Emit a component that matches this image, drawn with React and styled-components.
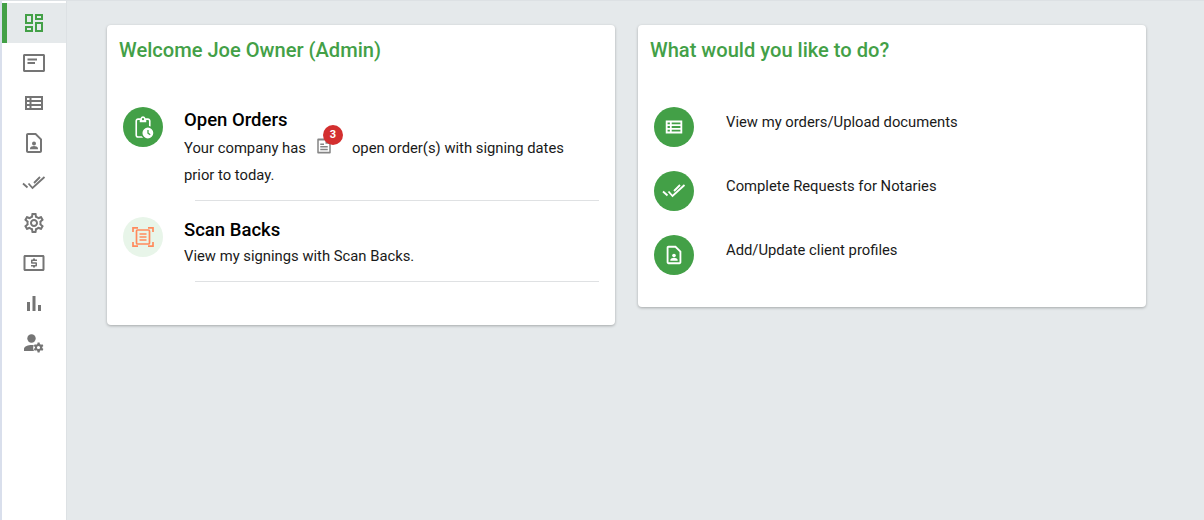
import React from "react";
import styled, { createGlobalStyle } from "styled-components";

const Global = createGlobalStyle`
  html, body { margin: 0; padding: 0; height: 100%; background: #e5e9eb; }
  body { font-family: Roboto, "Liberation Sans", sans-serif; color: #1a1a1a; }
  #root { height: 520px; overflow: hidden; }
`;

const Page = styled.div`
  display: flex;
  height: 520px;
  border-top: 1px solid #dde1e4;
  box-sizing: border-box;
`;
const Sidebar = styled.nav`
  width: 67px;
  flex: none;
  box-sizing: border-box;
  background: #fff;
  border-left: 2px solid #d9dfec;
  border-right: 1px solid #dde1e4;
  padding-top: 2px;
  display: flex;
  flex-direction: column;
`;
const NavItem = styled.div`
  position: relative;
  height: 40px;
  display: flex;
  align-items: center;
  justify-content: center;
  background: ${(p) => (p.$active ? "#e5e9eb" : "transparent")};
  color: ${(p) => (p.$active ? "#43a047" : "#757575")};
  ${(p) =>
    p.$active &&
    `&::before {
      content: "";
      position: absolute;
      left: 0;
      top: 0;
      bottom: 0;
      width: 5px;
      background: #43a047;
    }`}
`;
const Main = styled.main`
  flex: 1;
  display: grid;
  grid-template-columns: 508px 508px;
  column-gap: 23px;
  align-items: start;
  padding: 24px 0 0 40px;
`;
const Card = styled.section`
  background: #fff;
  border-radius: 4px;
  box-shadow: 0 1px 3px rgba(0, 0, 0, 0.28);
  padding: 12px 16px 0 12px;
  height: ${(p) => p.$h}px;
  box-sizing: border-box;
`;
const Title = styled.h2`
  margin: 0;
  font-size: 20.1px;
  line-height: 26px;
  font-weight: 500;
  color: #43a047;
`;
const RowList = styled.div`
  margin-top: 28px;
  display: flex;
  flex-direction: column;
`;
const Row = styled.div`
  display: flex;
  align-items: flex-start;
  padding: 16px 0 11px 4px;
`;
const Circle = styled.div`
  width: 40px;
  height: 40px;
  flex: none;
  border-radius: 50%;
  display: flex;
  align-items: center;
  justify-content: center;
  background: ${(p) => (p.$soft ? "#e8f5e9" : "#43a047")};
  color: ${(p) => (p.$soft ? "#ff8a5c" : "#fff")};
`;
const RowBody = styled.div`
  margin-left: 21px;
  flex: 1;
  padding-right: 30px;
`;
const RowTitle = styled.div`
  margin-top: 1px;
  font-size: 18.5px;
  line-height: 24px;
  font-weight: 500;
  color: #000;
`;
const RowText = styled.div`
  font-size: 14.8px;
  line-height: 27px;
  margin-top: ${(p) => p.$gap}px;
`;
const Divider = styled.div`
  height: 1px;
  background: #dfe1e3;
  margin-left: 76px;
`;
const OrderIcon = styled.span`
  position: relative;
  display: inline-block;
  width: 20px;
  height: 18px;
  margin: 0 17px 0 9px;
  vertical-align: -2px;
  color: #858585;
`;
const Badge = styled.span`
  position: absolute;
  top: -12px;
  left: 8px;
  width: 20px;
  height: 20px;
  border-radius: 50%;
  background: #d32f2f;
  color: #fff;
  font-size: 11px;
  font-weight: 700;
  line-height: 20px;
  text-align: center;
`;
const ActionList = styled.div`
  margin-top: 44px;
  display: flex;
  flex-direction: column;
  gap: 24px;
`;
const ActionRow = styled.div`
  display: flex;
  align-items: flex-start;
  padding-left: 4px;
`;
const ActionText = styled.div`
  margin: 5px 0 0 32px;
  font-size: 14.8px;
  line-height: 20px;
`;

const Svg = ({ size = 24, children, fill = "currentColor" }) => (
  <svg width={size} height={size} viewBox="0 0 24 24" fill={fill} style={{ display: "block" }}>
    {children}
  </svg>
);

const DashboardIcon = (p) => (
  <Svg {...p}>
    <path d="M19 5v2h-4V5h4M9 5v6H5V5h4m10 8v6h-4v-6h4M9 17v2H5v-2h4M21 3h-8v6h8V3zM11 3H3v10h8V3zm10 8h-8v10h8V11zm-10 4H3v6h8v-6z" />
  </Svg>
);
const CardIcon = (p) => (
  <Svg {...p}>
    <path d="M2.500 3h19c.83 0 1.500.67 1.500 1.500v15c0 .83-.67 1.500-1.500 1.500h-19C1.670 21 1 20.330 1 19.500v-15C1 3.670 1.670 3 2.500 3zm.5 2v14h18V5H3zm2.500 2.500H15v2H5.500v-2zm0 3.500H13v2H5.500v-2z" />
  </Svg>
);
const ListIcon = (p) => (
  <Svg {...p}>
    <path d="M3 5v14h18V5H3zm2 2h2.500v2H5V7zm4.500 0H19v2H9.500V7zM5 11h2.500v2H5v-2zm4.500 0H19v2H9.500v-2zM5 15h2.500v2H5v-2zm4.500 0H19v2H9.500v-2z" />
  </Svg>
);
const DocPersonIcon = (p) => (
  <Svg {...p}>
    <path d="M14 2H6c-1.100 0-2 .9-2 2v16c0 1.100.9 2 2 2h12c1.100 0 2-.9 2-2V8l-6-6zm4 18H6V4h7.200L18 8.800V20z" />
    <circle cx="12" cy="12.500" r="2" />
    <path d="M8 18.200v-1c0-1.400 2.700-2.200 4-2.200s4 .8 4 2.200v1H8z" />
  </Svg>
);
const DoneAllIcon = (p) => (
  <Svg {...p} fill="none">
    <path
      d="M1 12.500l4.500 4M6.500 12.500l4 4.500L22.500 6M12 12l6-6"
      stroke="currentColor"
      strokeWidth="1.800"
    />
  </Svg>
);
const GearIcon = (p) => (
  <Svg {...p}>
    <path d="M19.430 12.980c.04-.32.07-.64.07-.98 0-.34-.03-.66-.07-.98l2.110-1.650c.19-.15.24-.42.12-.64l-2-3.460c-.09-.16-.26-.25-.44-.25-.06 0-.12.01-.17.03l-2.490 1c-.52-.4-1.080-.73-1.690-.98l-.38-2.650C14.460 2.180 14.250 2 14 2h-4c-.25 0-.46.18-.49.42l-.38 2.650c-.61.25-1.170.59-1.690.98l-2.490-1c-.06-.02-.12-.03-.18-.03-.17 0-.34.09-.43.25l-2 3.460c-.13.22-.07.49.12.64l2.110 1.650c-.04.32-.07.65-.07.98 0 .33.03.66.07.98l-2.110 1.650c-.19.15-.24.42-.12.64l2 3.460c.09.16.26.25.44.25.06 0 .12-.01.17-.03l2.490-1c.52.4 1.080.73 1.690.98l.38 2.650c.03.24.24.42.49.42h4c.25 0 .46-.18.49-.42l.38-2.650c.61-.25 1.170-.59 1.690-.98l2.490 1c.06.02.12.03.18.03.17 0 .34-.09.43-.25l2-3.460c.12-.22.07-.49-.12-.64l-2.110-1.650zm-1.980-1.710c.04.31.05.52.05.73 0 .21-.02.43-.05.73l-.14 1.130.89.7 1.080.84-.7 1.210-1.270-.51-1.040-.42-.9.68c-.43.32-.84.56-1.250.73l-1.060.43-.16 1.130-.2 1.350h-1.400l-.19-1.350-.16-1.130-1.060-.43c-.43-.18-.83-.41-1.230-.71l-.91-.7-1.060.43-1.270.51-.7-1.210 1.080-.84.89-.7-.14-1.130c-.03-.31-.05-.54-.05-.74s.02-.43.05-.73l.14-1.130-.89-.7-1.080-.84.7-1.210 1.270.51 1.040.42.9-.68c.43-.32.84-.56 1.250-.73l1.060-.43.16-1.130.2-1.350h1.390l.19 1.350.16 1.130 1.060.43c.43.18.83.41 1.230.71l.91.7 1.060-.43 1.270-.51.7 1.210-1.070.85-.89.7.14 1.130zM12 8c-2.210 0-4 1.790-4 4s1.790 4 4 4 4-1.790 4-4-1.790-4-4-4zm0 6c-1.100 0-2-.9-2-2s.9-2 2-2 2 .9 2 2-.9 2-2 2z" />
  </Svg>
);
const DollarIcon = (p) => (
  <Svg {...p}>
    <path d="M3 4h18c.83 0 1.500.67 1.500 1.500v13c0 .83-.67 1.500-1.500 1.500H3c-.83 0-1.500-.67-1.500-1.500v-13C1.500 4.670 2.170 4 3 4zm.5 2v12h17V6h-17z" />
    <path d="M9 14h4.500v-1.200H10c-.55 0-1-.45-1-1V9.500c0-.55.45-1 1-1h1V7.500h2v1h2V10h-4.500v1.200H14c.55 0 1 .45 1 1v2.300c0 .55-.45 1-1 1h-1v1h-2v-1H9V14z" />
  </Svg>
);
const BarsIcon = (p) => (
  <Svg {...p}>
    <path d="M5 11h3v9H5zM10.500 5h3v15h-3zM16 14h3v6h-3z" />
  </Svg>
);
const PersonGearIcon = (p) => (
  <Svg {...p}>
    <circle cx="9.500" cy="7.500" r="4.200" />
    <path d="M2 20v-2c0-2.600 4.500-4 7.500-4 .8 0 1.500.1 2.300.2-.5 1.100-.8 2.200-.6 3.400.1.900.4 1.700.8 2.400H2z" />
    <path d="M20.300 16.500c0-.2 0-.4-.1-.6l1.200-1-1-1.700-1.500.5c-.3-.3-.6-.4-1-.6l-.3-1.600h-2l-.3 1.600c-.4.2-.7.3-1 .6l-1.500-.5-1 1.700 1.200 1a3 3 0 0 0 0 1.200l-1.200 1 1 1.700 1.500-.5c.3.300.6.400 1 .6l.3 1.600h2l.3-1.600c.4-.2.700-.3 1-.6l1.500.5 1-1.700-1.200-1c.1-.2.100-.4.100-.6zm-3.800 1.600a1.600 1.600 0 1 1 0-3.200 1.600 1.600 0 0 1 0 3.200z" />
  </Svg>
);
const ClipboardClockIcon = (p) => (
  <Svg {...p}>
    <path d="M16.500 4H14.300C13.900 2.800 13 2 12 2s-1.900.8-2.300 2H7.500C6.100 4 5 5.100 5 6.500v13C5 20.900 6.100 22 7.500 22h4.700a7 7 0 0 1-1.400-1.500H7.500a1 1 0 0 1-1-1v-13c0-.55.45-1 1-1H9v2h6v-2h1.500c.55 0 1 .45 1 1v4.600c.5.100 1 .2 1.500.4V6.500C19 5.100 17.900 4 16.500 4zM12 5.800a1 1 0 1 1 0-2 1 1 0 0 1 0 2z" />
    <path d="M16.500 12.500a5 5 0 1 0 0 10 5 5 0 0 0 0-10zm1.800 7.200L16 17.900v-3.100h1.200v2.500l1.800 1.500-.7.900z" />
  </Svg>
);
const ScanIcon = (p) => (
  <Svg {...p} fill="none">
    <g stroke="currentColor" strokeWidth="1.700">
      <path d="M2 7V2.800h5M22 7V2.800h-5M2 17v4.200h5M22 17v4.200h-5" />
      <rect x="5.500" y="5" width="13" height="14" rx="1" />
      <path d="M8.500 9h7M8.500 12h7M8.500 15h7" />
    </g>
  </Svg>
);
const NoteIcon = (p) => (
  <Svg {...p}>
    <path d="M4.500 2H15l6 6v12.500c0 .83-.67 1.500-1.500 1.500h-15C3.670 22 3 21.330 3 20.500v-17C3 2.670 3.670 2 4.500 2zM5 4.500v15h14V9h-5V4.500H5z" />
    <path d="M7 8.500h5v2H7zM7 12h10v2H7zM7 15.500h10v2H7z" />
  </Svg>
);

const navIcons = [
  CardIcon,
  ListIcon,
  DocPersonIcon,
  DoneAllIcon,
  GearIcon,
  DollarIcon,
  BarsIcon,
  PersonGearIcon,
];
const actions = [
  [ListIcon, "View my orders/Upload documents", 22],
  [DoneAllIcon, "Complete Requests for Notaries", 24],
  [DocPersonIcon, "Add/Update client profiles", 22],
];

export default function App() {
  return (
    <Page>
      <Global />
      <Sidebar>
        <NavItem $active>
          <DashboardIcon />
        </NavItem>
        {navIcons.map((Icon, i) => (
          <NavItem key={i}>
            <Icon />
          </NavItem>
        ))}
      </Sidebar>
      <Main>
        <Card $h={300}>
          <Title>Welcome Joe Owner (Admin)</Title>
          <RowList>
            <Row>
              <Circle>
                <ClipboardClockIcon size={26} />
              </Circle>
              <RowBody>
                <RowTitle>Open Orders</RowTitle>
                <RowText $gap={3}>
                  Your company has
                  <OrderIcon>
                    <NoteIcon size={18} />
                    <Badge>3</Badge>
                  </OrderIcon>
                  open order(s) with signing dates prior to today.
                </RowText>
              </RowBody>
            </Row>
            <Divider />
            <Row>
              <Circle $soft>
                <ScanIcon size={24} />
              </Circle>
              <RowBody>
                <RowTitle>Scan Backs</RowTitle>
                <RowText $gap={1}>View my signings with Scan Backs.</RowText>
              </RowBody>
            </Row>
            <Divider />
          </RowList>
        </Card>
        <Card $h={282}>
          <Title>What would you like to do?</Title>
          <ActionList>
            {actions.map(([Icon, text, size]) => (
              <ActionRow key={text}>
                <Circle>
                  <Icon size={size} />
                </Circle>
                <ActionText>{text}</ActionText>
              </ActionRow>
            ))}
          </ActionList>
        </Card>
      </Main>
    </Page>
  );
}
